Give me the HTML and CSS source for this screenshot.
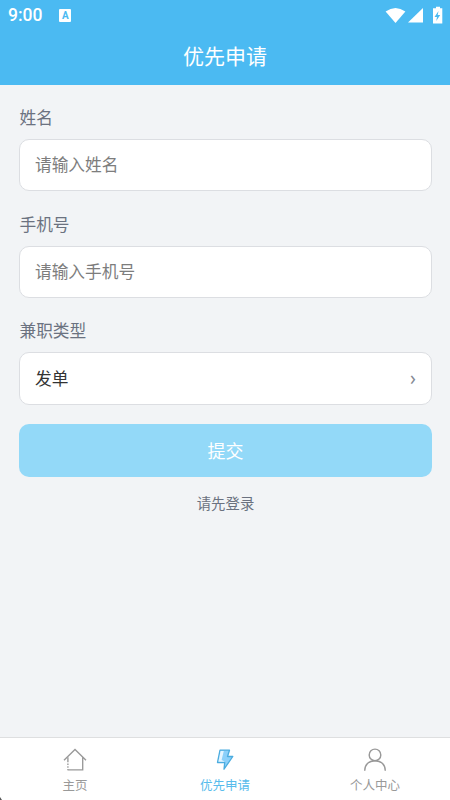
FILE: index.html
```html
<!DOCTYPE html>
<html lang="zh-CN">
<head>
<meta charset="utf-8">
<meta name="viewport" content="width=device-width, initial-scale=1">
<title>优先申请</title>
<link rel="stylesheet" href="styles.css">
</head>
<body>
<div class="app">
  <header class="header">
    <div class="status">
      <span class="clock">9:00</span>
      <span class="badge">A</span>
      <svg class="signals" width="58" height="20" viewBox="0 0 58 20" fill="#fff">
        <path d="M.6 5.500Q10.500-1.500 20.400 5.500L10.500 17Z" transform="translate(0 1)"/>
        <path d="M23 17.500L38 3V17.500Z"/>
        <path d="M51 1.700h4v1.600h2.300v15.200h-9.300V3.300h3Z"/>
        <path fill="#4bbaf2" d="M53.500 6l-4 6h2.500l-.8 4 4-6h-2.500Z"/>
      </svg>
    </div>
    <h1 class="title">优先申请</h1>
  </header>
  <main class="form">
    <div class="group">
      <label class="label" for="name">姓名</label>
      <input class="field" id="name" type="text" placeholder="请输入姓名">
    </div>
    <div class="group">
      <label class="label" for="phone">手机号</label>
      <input class="field" id="phone" type="tel" placeholder="请输入手机号">
    </div>
    <div class="group">
      <div class="label">兼职类型</div>
      <div class="field picker"><span>发单</span><span class="arrow">›</span></div>
    </div>
    <button class="submit" type="button">提交</button>
    <p class="hint">请先登录</p>
  </main>
  <nav class="tabs">
    <div class="tab">
      <svg class="icon" viewBox="0 0 26 26" fill="none" stroke="#999" stroke-width="1.350">
        <path d="M2 13.200L13 2.400l11 10.800M20.700 10.500v12.300H5.500"/>
        <path d="M5.900 10.200v12.600" stroke-dasharray="5 1.300 1.500 1.300 1.500 1.300"/>
      </svg>
      <span>主页</span>
    </div>
    <div class="tab active">
      <svg class="icon" viewBox="0 0 26 26" stroke="#4bacdf" stroke-width="1.300" stroke-linejoin="round">
        <path fill="#8bd0fa" d="M8 3.200h9.500l-2 6.300h5.300L12 22.200l.7-6.700H5.500Z"/>
        <path fill="#e4f5ff" stroke="none" d="M8.600 4h3.200L9.600 13l3.400 1.700H6.400Z"/>
      </svg>
      <span>优先申请</span>
    </div>
    <div class="tab">
      <svg class="icon" viewBox="0 0 26 26" fill="none" stroke="#999" stroke-width="1.450">
        <circle cx="13" cy="7.900" r="5.800"/>
        <path d="M2.700 23.700c0-6 4-10 10.300-10s10.300 4 10.300 10"/>
      </svg>
      <span>个人中心</span>
    </div>
    <i class="corner"></i>
  </nav>
</div>
</body>
</html>
```
FILE: styles.css
```css
* { box-sizing: border-box; }
body {
  margin: 0;
  font-family: "Noto Sans CJK SC", sans-serif;
}
.app {
  height: 800px;
  display: flex;
  flex-direction: column;
  background: #f2f4f6;
  overflow: hidden;
}
.header {
  height: 85px;
  flex: none;
  background: #4bbaf2;
  color: #fff;
}
.status {
  height: 30px;
  padding: 0 7px 0 8px;
  display: flex;
  align-items: center;
}
.clock {
  font: 500 17.500px/30px Roboto, sans-serif;
}
.badge {
  width: 12px;
  height: 13px;
  margin-left: 17px;
  border-radius: 1px;
  background: #fff;
  color: #4bbaf2;
  font: 700 10px/13px Roboto, sans-serif;
  text-align: center;
}
.signals { margin-left: auto; }
.title {
  margin: 0;
  font-size: 21px;
  font-weight: 400;
  line-height: 51px;
  text-align: center;
}
.form {
  flex: 1;
  padding: 19px 18px 0 19px;
}
.group { margin-bottom: 19.300px; }
.label {
  display: block;
  height: 35px;
  padding-left: 0.500px;
  line-height: 27px;
  font-size: 16.700px;
  color: #6b7280;
}
.field {
  display: block;
  width: 100%;
  height: 52.400px;
  padding: 0 15px 1.500px;
  border: 1px solid #dcdee2;
  border-radius: 10px;
  background: #fff;
  font-family: inherit;
  font-size: 16.700px;
  color: #333;
}
.field::placeholder { color: #7d7d7d; }
.picker {
  display: flex;
  align-items: center;
  justify-content: space-between;
}
.arrow {
  font-family: "Noto Sans", sans-serif;
  font-size: 19px;
  color: #858994;
}
.submit {
  display: block;
  width: 100%;
  height: 52.500px;
  padding: 0;
  border: 0;
  border-radius: 10px;
  background: #93d9f8;
  color: #fff;
  font-family: inherit;
  font-size: 18px;
}
.hint {
  margin: 15px 0 0;
  font-size: 14.400px;
  line-height: 22px;
  text-align: center;
  color: #6b7280;
}
.tabs {
  position: relative;
  height: 63px;
  flex: none;
  display: flex;
  border-top: 1px solid #dedfe0;
  background: #fff;
}
.tab {
  flex: 1;
  padding-top: 9px;
  display: flex;
  flex-direction: column;
  align-items: center;
  font-size: 12.500px;
  line-height: 18px;
  color: #999;
}
.tab span { margin-top: 3px; }
.active { color: #58bcec; }
.icon {
  display: block;
  width: 26px;
  height: 26px;
}
.corner {
  position: absolute;
  left: 0;
  bottom: 0;
  width: 2px;
  height: 3px;
  background: #555;
  clip-path: polygon(0 0, 100% 100%, 0 100%);
}
```
